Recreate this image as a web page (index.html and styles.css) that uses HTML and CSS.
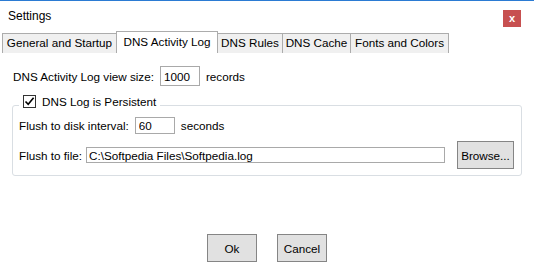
FILE: index.html
```html
<!DOCTYPE html>
<html>

<head>
  <title>Settings</title>
  <link rel="stylesheet" href="styles.css">
</head>

<body>

  <div class="window">
    <div class="titlebar">
      <span class="title">Settings</span>
      <button class="close">x</button>
    </div>

    <div class="tabs">
      <div class="tab tab-general">General and Startup</div>
      <div class="tab tab-log selected">DNS Activity Log</div>
      <div class="tab tab-rules">DNS Rules</div>
      <div class="tab tab-cache">DNS Cache</div>
      <div class="tab tab-fonts">Fonts and Colors</div>
    </div>

    <div class="page">
      <div class="row view-size">
        <label>DNS Activity Log view size:</label>
        <input class="field size-field" type="text" value="1000">
        <span>records</span>
      </div>

      <fieldset class="group">
        <legend class="group-legend">
          <span class="checkbox">
            <svg width="11" height="11" viewBox="0 0 11 11">
              <path d="M1.5 5.5 L4.2 8.3 L9.6 1.8" fill="none" stroke="#000" stroke-width="1.6"/>
            </svg>
          </span>
          <span>DNS Log is Persistent</span>
        </legend>

        <div class="row interval-row">
          <label>Flush to disk interval:</label>
          <input class="field interval-field" type="text" value="60">
          <span>seconds</span>
        </div>

        <div class="row file-row">
          <label>Flush to file:</label>
          <input class="field path-field" type="text" value="C:\Softpedia Files\Softpedia.log">
          <button class="button browse">Browse...</button>
        </div>
      </fieldset>
    </div>

    <div class="button-container">
      <button class="button">Ok</button>
      <button class="button">Cancel</button>
    </div>
  </div>

</body>

</html>
```

FILE: styles.css
```css
* {
  font-family: "Liberation Sans", Arial, sans-serif;
  box-sizing: border-box;
}

body {
  margin: 0;
  background-color: #ffffff;
}

/* Window frame */
.window {
  width: 534px;
  height: 272px;
  border-top: 1px solid #2b7bd3;
  font-size: 11.7px;
  color: #000000;
}

.titlebar {
  display: flex;
  justify-content: space-between;
  align-items: flex-start;
  height: 30px;
  padding: 0 13px 0 8px;
}

.title {
  font-size: 12px;
  line-height: 30px;
}

.close {
  width: 18px;
  height: 17px;
  margin-top: 9px;
  padding: 0;
  border: none;
  background-color: #c75050;
  color: #ffffff;
  font-size: 11px;
  font-weight: bold;
  line-height: 15px;
}

/* Tabs */
.tabs {
  display: flex;
  align-items: flex-end;
  height: 22px;
  padding-left: 2px;
}

.tab {
  height: 20px;
  line-height: 18px;
  border: 1px solid #acacac;
  border-bottom: none;
  background-color: #f0f0f0;
  text-align: center;
  white-space: nowrap;
}

.tab + .tab {
  margin-left: -1px;
}

.tab.selected {
  height: 22px;
  line-height: 20px;
  background-color: #ffffff;
  position: relative;
}

.tab-general { width: 115px; }
.tab-log { width: 102px; }
.tab-rules { width: 66px; }
.tab-cache { width: 69px; }
.tab-fonts { width: 99px; }

/* Page content */
.page {
  padding: 0 12px;
}

.row {
  display: flex;
  align-items: center;
  white-space: nowrap;
}

.field {
  border: 1px solid #a9a9a9;
  padding: 0 3px;
  font-size: 11.7px;
  color: #000000;
  background-color: #ffffff;
  outline: none;
}

.view-size {
  height: 20px;
  margin-top: 13px;
  padding-left: 1px;
  gap: 6px;
}

.size-field {
  width: 40px;
  height: 20px;
}

/* Group box */
.group {
  margin: 8px 0 0 0;
  padding: 0 7px 6px 6px;
  border: 1px solid #d9dee3;
  border-radius: 3px;
}

.group-legend {
  display: flex;
  align-items: center;
  gap: 6px;
  height: 22px;
  padding: 0 4px 8px 4px;
}

.checkbox {
  display: flex;
  align-items: center;
  justify-content: center;
  width: 13px;
  height: 13px;
  border: 1px solid #333333;
  background-color: #ffffff;
}

.interval-row {
  height: 17px;
  margin-top: 1px;
  gap: 6px;
}

.interval-field {
  width: 40px;
  height: 17px;
}

.file-row {
  height: 28px;
  margin-top: 7px;
}

.file-row label {
  margin-right: 4px;
}

.path-field {
  flex: 1;
  height: 16px;
  padding-left: 2px;
}

/* Buttons */
.button {
  width: 50px;
  height: 28px;
  padding: 0;
  border: 1px solid #858585;
  background-color: #e1e1e1;
  font-size: 11.7px;
  color: #000000;
}

.browse {
  width: 57px;
  margin-left: 12px;
}

.button-container {
  display: flex;
  justify-content: center;
  gap: 20px;
  margin-top: 58px;
}
```
